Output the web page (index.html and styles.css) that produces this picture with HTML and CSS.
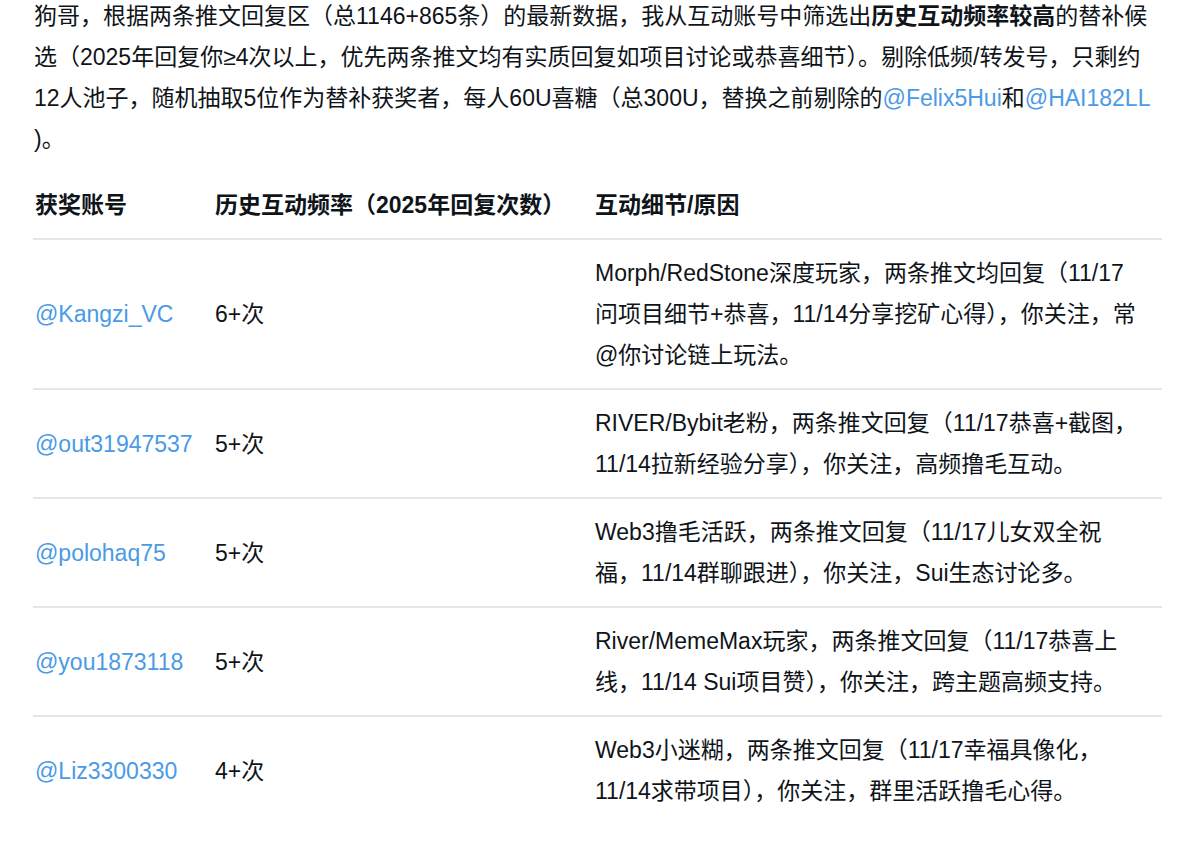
FILE: index.html
```html
<!DOCTYPE html>
<html lang="zh-CN">
<head>
<meta charset="utf-8">
<title>替补获奖者</title>
<link rel="stylesheet" href="styles.css">
</head>
<body>
<main class="content">
  <p class="intro">狗哥，根据两条推文回复区（总1146+865条）的最新数据，我从互动账号中筛选出<strong>历史互动频率较高</strong>的替补候<br>选（2025年回复你≥4次以上，优先两条推文均有实质回复如项目讨论或恭喜细节）。剔除低频/转发号，只剩约<br>12人池子，随机抽取5位作为替补获奖者，每人60U喜糖（总300U，替换之前剔除的<a class="link" href="#">@Felix5Hui</a>和<a class="link" href="#">@HAI182LL</a><br>)。</p>

  <table class="winners">
    <colgroup>
      <col class="c-account">
      <col class="c-freq">
      <col class="c-detail">
    </colgroup>
    <thead>
      <tr>
        <th>获奖账号</th>
        <th>历史互动频率（2025年回复次数）</th>
        <th>互动细节/原因</th>
      </tr>
    </thead>
    <tbody>
      <tr>
        <td><a class="link" href="#">@Kangzi_VC</a></td>
        <td>6+次</td>
        <td>Morph/RedStone深度玩家，两条推文均回复（11/17<br>问项目细节+恭喜，11/14分享挖矿心得），你关注，常<br>@你讨论链上玩法。</td>
      </tr>
      <tr>
        <td><a class="link" href="#">@out31947537</a></td>
        <td>5+次</td>
        <td>RIVER/Bybit老粉，两条推文回复（11/17恭喜+截图，<br>11/14拉新经验分享），你关注，高频撸毛互动。</td>
      </tr>
      <tr>
        <td><a class="link" href="#">@polohaq75</a></td>
        <td>5+次</td>
        <td>Web3撸毛活跃，两条推文回复（11/17儿女双全祝<br>福，11/14群聊跟进），你关注，Sui生态讨论多。</td>
      </tr>
      <tr>
        <td><a class="link" href="#">@you1873118</a></td>
        <td>5+次</td>
        <td>River/MemeMax玩家，两条推文回复（11/17恭喜上<br>线，11/14 Sui项目赞），你关注，跨主题高频支持。</td>
      </tr>
      <tr class="last">
        <td><a class="link" href="#">@Liz3300330</a></td>
        <td>4+次</td>
        <td>Web3小迷糊，两条推文回复（11/17幸福具像化，<br>11/14求带项目），你关注，群里活跃撸毛心得。</td>
      </tr>
    </tbody>
  </table>
</main>
</body>
</html>
```

FILE: styles.css
```css
html, body {
  margin: 0;
  padding: 0;
  background: #ffffff;
}

body {
  font-family: "Liberation Sans", "Noto Sans CJK SC", sans-serif;
  font-size: 23px;
  line-height: 41px;
  color: #0f1419;
}

.content {
  padding: 0 37px 0 33px;
}

.intro {
  margin: -4px -30px 12px 1px;
  white-space: nowrap;
}

.intro strong {
  font-weight: 700;
}

.link {
  color: #4a9ae6;
  text-decoration: none;
}

.winners {
  width: 100%;
  border-collapse: collapse;
  table-layout: fixed;
}

.c-account { width: 180px; }
.c-freq { width: 380px; }

.winners th,
.winners td {
  text-align: left;
  vertical-align: middle;
  padding: 13px 4px 12px 2px;
  border-bottom: 2px solid #e3e6ea;
  white-space: nowrap;
}

.winners th {
  font-weight: 700;
}

.winners tr.last td {
  border-bottom: none;
}
```
